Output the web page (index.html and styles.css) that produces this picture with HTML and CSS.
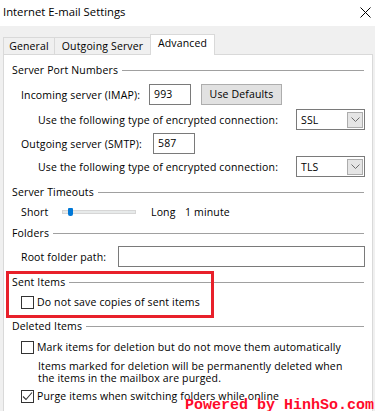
FILE: index.html
```html
<!DOCTYPE html>
<html>
<head>
<meta charset="utf-8">
<link rel="stylesheet" href="styles.css">
</head>
<body>
<div class="window">
  <div class="titlebar">
    <span class="title">Internet E-mail Settings</span>
    <svg class="close" width="11" height="11" viewBox="0 0 11 11"><path d="M0.5 0.5 L10.5 10.5 M10.5 0.5 L0.5 10.5" stroke="#000" stroke-width="1" fill="none"/></svg>
  </div>
  <div class="tabs">
    <div class="tab tab-general">General</div>
    <div class="tab tab-outgoing">Outgoing Server</div>
    <div class="tab tab-active">Advanced</div>
  </div>
  <div class="panel">
    <div class="legend first"><span>Server Port Numbers</span><i></i></div>
    <div class="row row-incoming">
      <span class="label label-imap">Incoming server (IMAP):</span>
      <span class="input port">993</span>
      <span class="button">Use Defaults</span>
    </div>
    <div class="row row-enc1 indent2">
      <span>Use the following type of encrypted connection:</span>
      <span class="select"><span class="sel-text">SSL</span><span class="sel-btn"><svg width="9" height="5" viewBox="0 0 9 5"><path d="M0.5 0.5 L4.5 4.5 L8.5 0.5" stroke="#6d6d6d" fill="none"/></svg></span></span>
    </div>
    <div class="row row-outgoing">
      <span class="label label-smtp">Outgoing server (SMTP):</span>
      <span class="input port">587</span>
    </div>
    <div class="row row-enc2 indent2">
      <span>Use the following type of encrypted connection:</span>
      <span class="select"><span class="sel-text">TLS</span><span class="sel-btn"><svg width="9" height="5" viewBox="0 0 9 5"><path d="M0.5 0.5 L4.5 4.5 L8.5 0.5" stroke="#6d6d6d" fill="none"/></svg></span></span>
    </div>

    <div class="legend"><span>Server Timeouts</span><i></i></div>
    <div class="row row-slider">
      <span class="lbl-short">Short</span>
      <span class="slider"><span class="thumb"></span></span>
      <span class="lbl-long">Long</span>
      <span>1 minute</span>
    </div>

    <div class="legend legend-folders"><span>Folders</span><i></i></div>
    <div class="row row-root">
      <span class="label label-root">Root folder path:</span>
      <span class="input wide"></span>
    </div>

    <div class="sent">
      <div class="legend"><span>Sent Items</span><i></i></div>
      <div class="row row-check">
        <span class="checkbox"></span>
        <span>Do not save copies of sent items</span>
      </div>
      <div class="highlight"></div>
    </div>

    <div class="legend legend-deleted"><span>Deleted Items</span><i></i></div>
    <div class="row row-mark">
      <span class="checkbox"></span>
      <span>Mark items for deletion but do not move them automatically</span>
    </div>
    <p class="note">Items marked for deletion will be permanently deleted when<br>the items in the mailbox are purged.</p>
    <div class="row row-purge">
      <span class="checkbox"><svg width="11" height="11" viewBox="0 0 11 11"><path d="M1 5.5 L4 8.5 L10 1.5" stroke="#333" stroke-width="1.1" fill="none"/></svg></span>
      <span>Purge items when switching folders while online</span>
    </div>
  </div>
</div>
<div class="watermark">Powered by HinhSo.com</div>
</body>
</html>
```

FILE: styles.css
```css
html, body {
  margin: 0;
  padding: 0;
}
body {
  width: 375px;
  height: 411px;
  overflow: hidden;
  background: #f0f0f0;
  font-family: "Open Sans", "Noto Sans", sans-serif;
  font-size: 10.5px;
  letter-spacing: 0.15px;
  color: #000;
  position: relative;
}
.window {
  width: 375px;
}
.titlebar {
  height: 26px;
  background: #fff;
  display: flex;
  align-items: flex-start;
  justify-content: space-between;
  padding: 3px 4px 0 3px;
  box-sizing: border-box;
}
.title {
  font-size: 11.3px;
  letter-spacing: 0;
  line-height: 18px;
}
.close {
  margin-top: 4px;
}
.tabs {
  margin-top: 8px;
  height: 20px;
  display: flex;
  align-items: flex-end;
  padding-left: 3px;
}
.tab {
  box-sizing: border-box;
  height: 17px;
  line-height: 16px;
  text-align: center;
  background: #f0f0f0;
  border: 1px solid #d9d9d9;
  border-bottom: none;
  border-right: none;
}
.tab-general { width: 51px; }
.tab-outgoing { width: 96px; }
.tab-active {
  width: 65px;
  height: 21px;
  line-height: 17px;
  background: #fff;
  border-right: 1px solid #d9d9d9;
  margin-bottom: -1px;
  position: relative;
  z-index: 1;
}
.panel {
  margin-left: 3px;
  width: 370px;
  box-sizing: border-box;
  height: 380px;
  background: #fff;
  border: 1px solid #d9d9d9;
  padding: 0 7px 0 8px;
}
.legend {
  display: flex;
  align-items: center;
  height: 14px;
  line-height: 14px;
  margin-top: 8px;
  margin-right: 1px;
}
.legend i {
  flex: 1;
  height: 1px;
  background: #a0a0a0;
  margin-left: 4px;
}
.legend.first { margin-top: 8px; }
.legend-folders { margin-top: 7px; }
.legend-deleted { margin-top: 10px; }
.row {
  display: flex;
  align-items: center;
  padding-left: 9px;
  height: 21px;
}
.indent2 { padding-left: 26px; }
.row-incoming { margin-top: 7px; }
.row-enc1 { margin-top: 4px; }
.row-outgoing { margin-top: 3px; }
.row-enc2 { margin-top: 2px; }
.row-slider { margin-top: 6px; height: 14px; }
.row-root { margin-top: 6px; }
.row-check { margin-top: 6px; height: 14px; }
.row-mark { margin-top: 7px; height: 14px; }
.row-purge { margin-top: 5px; height: 14px; }
.label-imap { width: 128px; }
.label-smtp { width: 132px; }
.label-root { width: 97px; }
.input {
  box-sizing: border-box;
  height: 21px;
  border: 1px solid #7a7a7a;
  background: #fff;
  padding-left: 4px;
  line-height: 18px;
}
.port { width: 42px; }
.wide { flex: 1; }
.button {
  box-sizing: border-box;
  margin-left: 10px;
  width: 81px;
  height: 21px;
  line-height: 19px;
  text-align: center;
  background: #e1e1e1;
  border: 1px solid #adadad;
}
.select {
  box-sizing: border-box;
  margin-left: auto;
  width: 69px;
  height: 21px;
  border: 1px solid #7a7a7a;
  display: flex;
  align-items: center;
  justify-content: space-between;
  padding: 0 1px 0 4px;
}
.sel-text { line-height: 18px; }
.sel-btn {
  box-sizing: border-box;
  width: 16px;
  height: 16px;
  background: #e5e5e5;
  border: 1px solid #acacac;
  display: flex;
  align-items: center;
  justify-content: center;
}
.lbl-short { width: 41px; }
.slider {
  box-sizing: border-box;
  width: 74px;
  height: 4px;
  background: #e7eaea;
  border: 1px solid #d6d6d6;
  position: relative;
}
.thumb {
  position: absolute;
  left: 5px;
  top: -3px;
  width: 5px;
  height: 8px;
  background: #0078d7;
  border-radius: 1px 1px 2px 2px;
}
.lbl-long {
  margin-left: 15px;
  width: 34px;
}
.sent {
  position: relative;
}
.highlight {
  position: absolute;
  left: -6px;
  top: -4px;
  width: 208px;
  height: 47px;
  box-sizing: border-box;
  border: 3px solid #e8202a;
}
.checkbox {
  box-sizing: border-box;
  width: 13px;
  height: 13px;
  border: 1px solid #333;
  background: #fff;
  margin-right: 3px;
  display: flex;
  align-items: center;
  justify-content: center;
}
.note {
  margin: 6px 0 0 26px;
  line-height: 12px;
}
.watermark {
  position: absolute;
  left: 185px;
  top: 398px;
  font-family: "Liberation Mono", monospace;
  font-weight: bold;
  font-size: 15px;
  line-height: 15px;
  letter-spacing: 0;
  color: #ff0a2a;
  white-space: nowrap;
}
```
